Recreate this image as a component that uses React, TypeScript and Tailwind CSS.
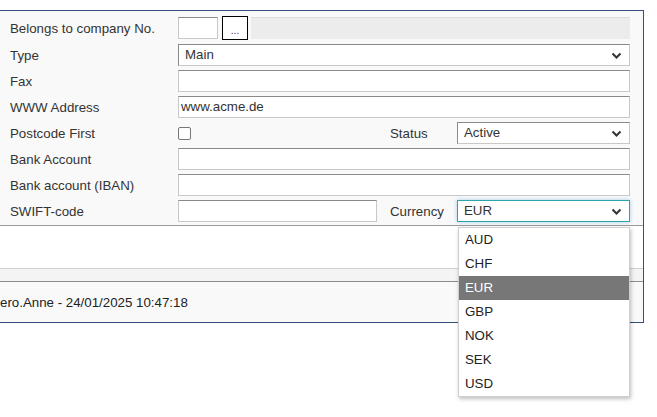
import { ReactNode } from "react";

const inputCls =
  "h-[22px] bg-white border border-[#c8c8c8] border-t-[#8a8a8a] text-[13.3px] text-[#333] leading-[20px]";

function Chevron() {
  return (
    <svg width="11" height="7" viewBox="0 0 11 7" className="shrink-0">
      <path d="M1.5 1.5l4 4 4-4" fill="none" stroke="#333" strokeWidth="2" />
    </svg>
  );
}

function Select({ value, className = "", focused = false }: { value: string; className?: string; focused?: boolean }) {
  return (
    <div
      className={`h-[22px] flex items-center justify-between pl-[6px] pr-[7px] bg-white text-[13.3px] text-[#333] ${
        focused
          ? "border border-[#2aa5ad] shadow-[0_0_4px_rgba(60,150,220,0.45)]"
          : "border border-[#c8c8c8] border-t-[#8a8a8a] border-l-[#8a8a8a]"
      } ${className}`}
    >
      <span>{value}</span>
      <Chevron />
    </div>
  );
}

function Row({ label, children, h = "h-[22px]" }: { label: string; children: ReactNode; h?: string }) {
  return (
    <div className={`flex items-center ${h}`}>
      <div className="w-[168px] shrink-0 text-[13.3px] text-[#333] pt-[1px]">{label}</div>
      <div className="flex-1 flex items-center">{children}</div>
    </div>
  );
}

const currencies = ["AUD", "CHF", "EUR", "GBP", "NOK", "SEK", "USD"];

export default function App() {
  return (
    <div className="relative w-[657px] h-[417px] bg-white overflow-hidden" style={{ fontFamily: '"Liberation Sans", Arial, sans-serif' }}>
      <div className="h-[10px]" />
      <div className="w-[644px] border-t border-r border-b border-[#34507a] bg-[#f9f9f9]">
        <div className="pt-[5px] pb-[3px] pl-[10px] pr-[13px] flex flex-col gap-[4px]">
          <Row label="Belongs to company No." h="h-[24px]">
            <div className={`${inputCls} w-[40px]`} />
            <div className="ml-[4px] w-[26px] h-[24px] bg-white border border-black flex items-end justify-center pb-[3px] text-[10px] leading-none text-[#333]">
              ...
            </div>
            <div className="ml-[3px] flex-1 h-[22px] bg-[#ececec] border-t border-[#dcdcdc]" />
          </Row>
          <Row label="Type">
            <Select value="Main" className="flex-1" />
          </Row>
          <Row label="Fax">
            <div className={`${inputCls} flex-1`} />
          </Row>
          <Row label="WWW Address">
            <div className={`${inputCls} flex-1 pl-[2px]`}>www.acme.de</div>
          </Row>
          <Row label="Postcode First">
            <div className="w-[13px] h-[13px] rounded-[2px] border border-[#767676] bg-white" />
            <div className="ml-[199px] w-[67px] text-[13.3px] text-[#333] pt-[1px]">Status</div>
            <Select value="Active" className="flex-1" />
          </Row>
          <Row label="Bank Account">
            <div className={`${inputCls} flex-1`} />
          </Row>
          <Row label="Bank account (IBAN)">
            <div className={`${inputCls} flex-1`} />
          </Row>
          <Row label="SWIFT-code">
            <div className={`${inputCls} w-[199px]`} />
            <div className="ml-[13px] w-[67px] text-[13.3px] text-[#333] pt-[1px]">Currency</div>
            <Select value="EUR" className="flex-1" focused />
          </Row>
        </div>
        <div className="h-[43px] bg-white border-t border-[#9a9a9a]" />
        <div className="h-[13px] bg-[#f4f4f4] border-t border-[#cfcfcf]" />
        <div className="h-[41px] border-t border-[#8c8c8c] flex items-center pt-[1px] text-[13.3px] text-[#222]">
          ero.Anne - 24/01/2025 10:47:18
        </div>
      </div>

      <div className="absolute left-[458px] top-[227px] w-[172px] bg-white border border-[#d0d0d0] shadow-[1px_2px_4px_rgba(0,0,0,0.25)]">
        {currencies.map((c) => (
          <div
            key={c}
            className={`h-[24px] flex items-center pl-[6px] text-[13.3px] ${
              c === "EUR" ? "bg-[#777777] text-white" : "text-[#222]"
            }`}
          >
            {c}
          </div>
        ))}
      </div>
    </div>
  );
}
